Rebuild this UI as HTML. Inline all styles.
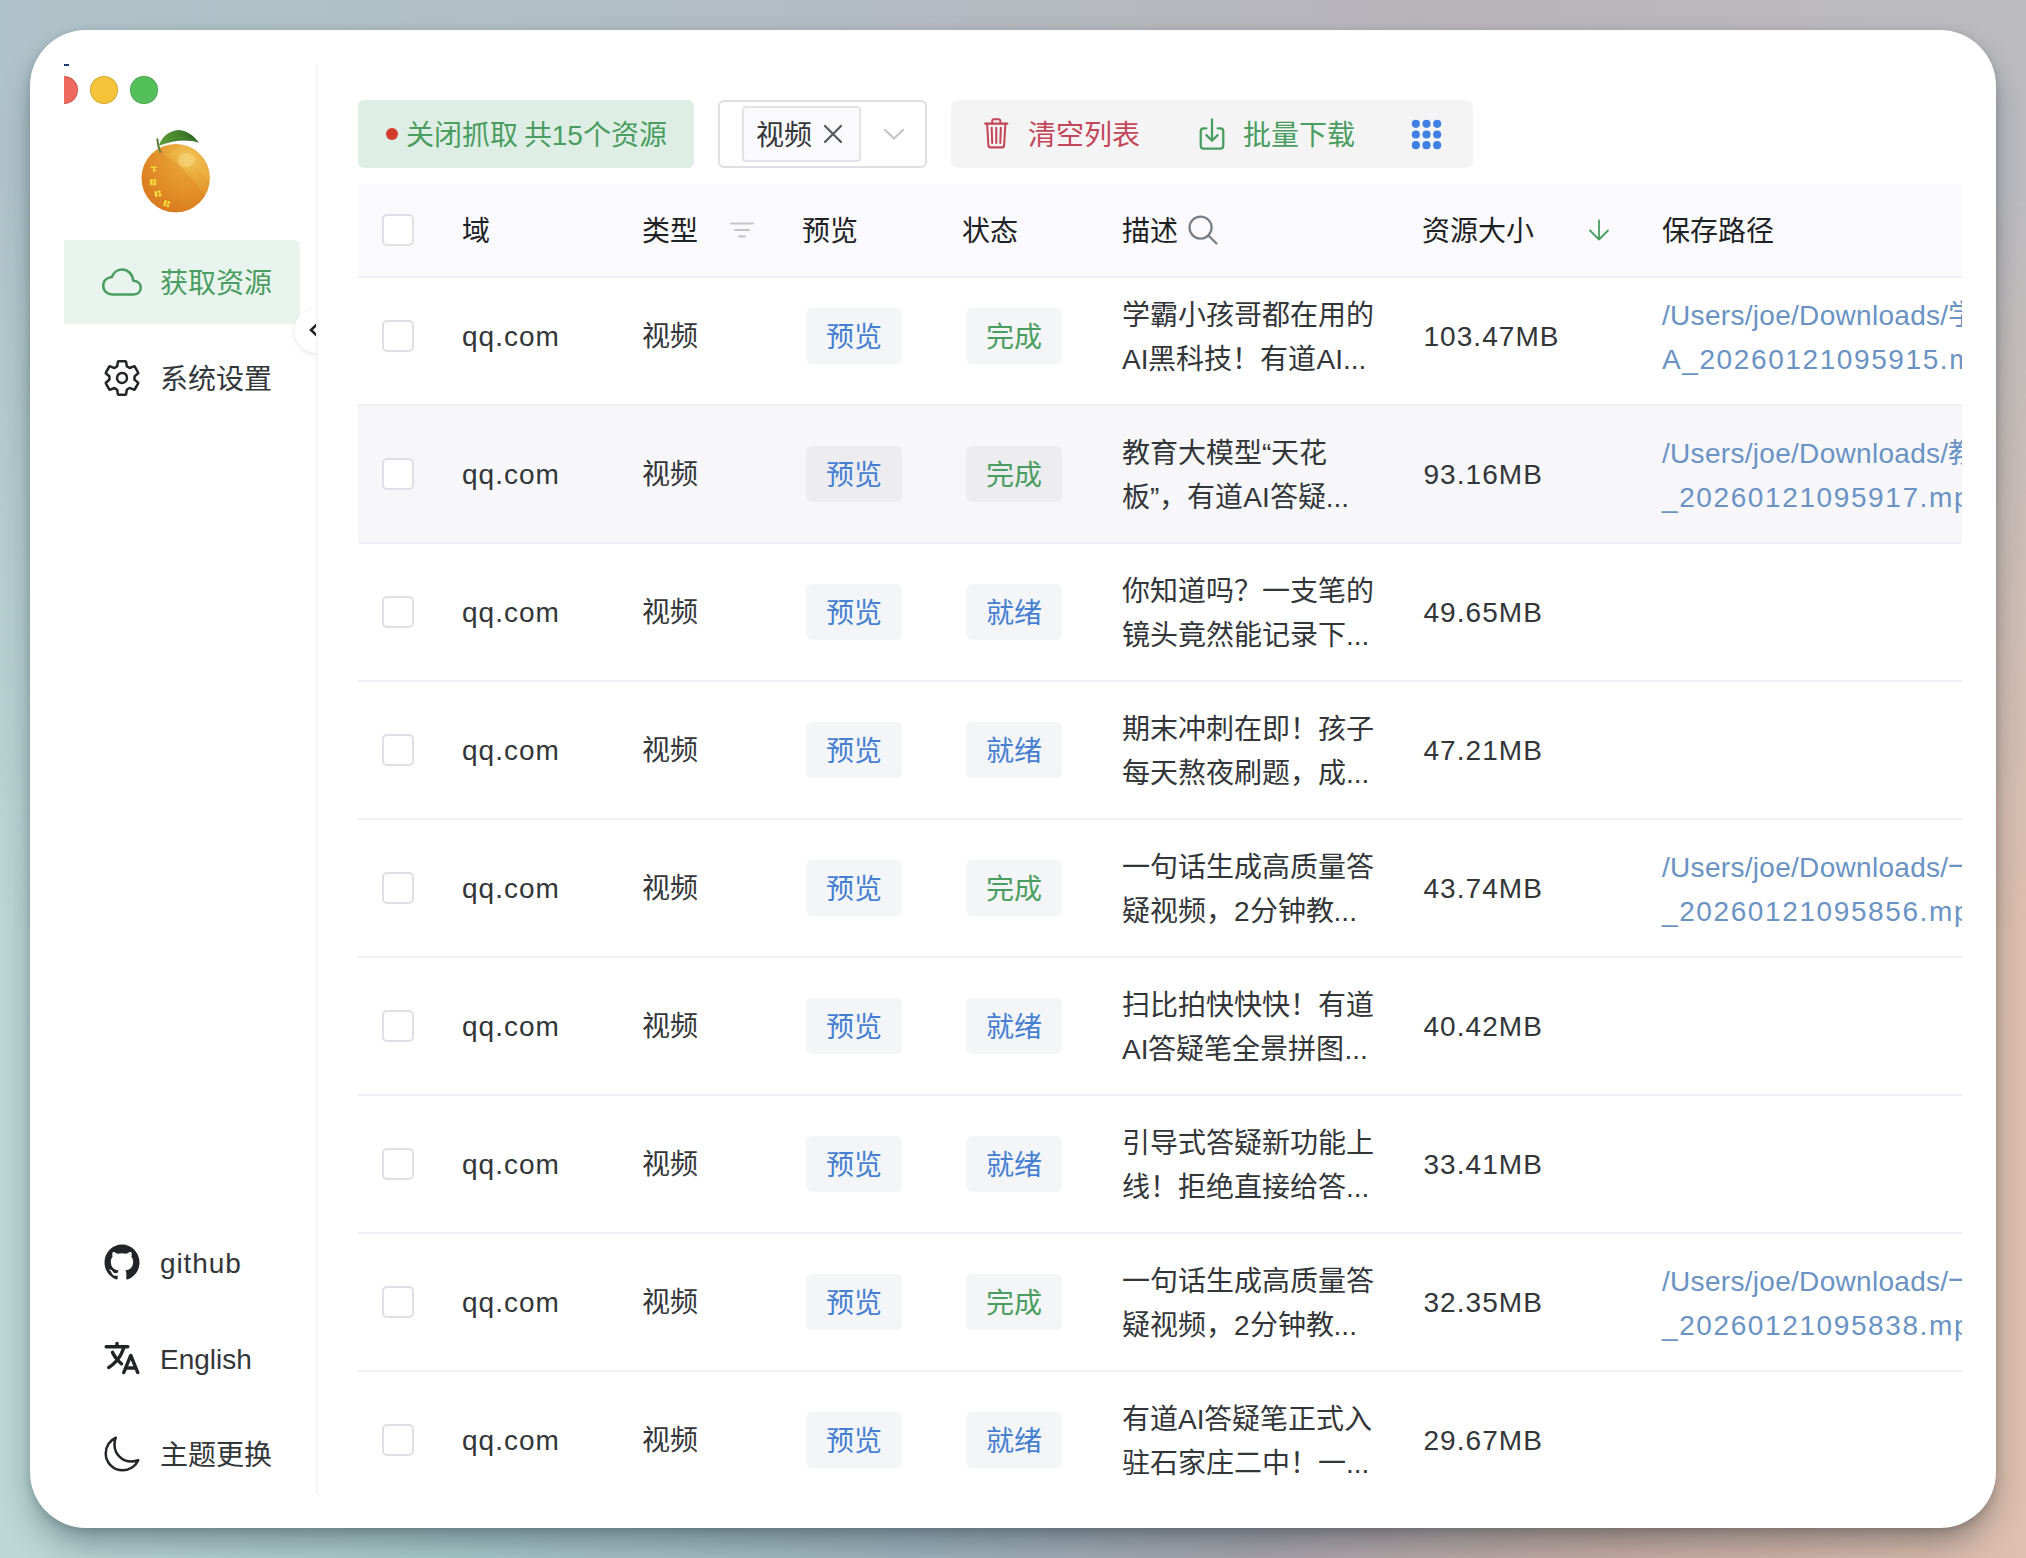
<!DOCTYPE html>
<html lang="zh-CN">
<head>
<meta charset="utf-8">
<title>res-downloader</title>
<style>
*{box-sizing:border-box;margin:0;padding:0}
html,body{width:2026px;height:1558px;overflow:hidden}
body{position:relative;font-family:"Liberation Sans",sans-serif;font-size:28px;color:#333639;background:#b4bcc2}
.bg{position:absolute;left:0;top:0;width:2026px;height:1558px;background:linear-gradient(to right,#bcd8d6 0%,#a9c8ca 24%,#9fb4be 46%,#aaa6ae 62%,#c9ada4 80%,#dfc0ae 100%)}
.bg2{position:absolute;left:0;top:0;width:2026px;height:1558px;background:linear-gradient(to right,#afc4ca 0%,#b2bdc5 35%,#b9b5ba 72%,#bcbcc0 100%);-webkit-mask-image:linear-gradient(to bottom,#000 0%,#000 12%,transparent 60%);mask-image:linear-gradient(to bottom,#000 0%,#000 12%,transparent 60%)}
.win{position:absolute;left:30px;top:30px;width:1966px;height:1498px;border-radius:56px;background:#fff;box-shadow:0 18px 34px -6px rgba(10,30,40,.42),0 2px 10px rgba(0,0,0,.14)}
.app{position:absolute;left:64px;top:64px;width:1898px;height:1430px;overflow:hidden;background:#fff}
.abs{position:absolute}
/* sidebar */
.sider{position:absolute;left:0;top:0;width:254px;height:1430px;border-right:2px solid #f5f5f8;overflow:hidden}
.tl{position:absolute;top:12px;width:28px;height:28px;border-radius:50%;border:1px solid rgba(0,0,0,.14)}
.mi{position:absolute;left:-16px;width:252px;height:84px;border-radius:6px;color:#333639}
.mi svg{color:#222427}
.mi.act svg{color:#4a9d60}
.mi svg{position:absolute;left:54px;top:22px}
.mi>span{position:absolute;left:112px;top:2px;line-height:84px;white-space:nowrap}
.mi.act{background:#e9f4ee;color:#4a9d60}
.tog{position:absolute;left:229.500px;top:243.500px;width:45px;height:45px;border-radius:50%;background:#fff;box-shadow:0 2px 5px rgba(0,0,0,.07),0 0 0 1px rgba(0,0,0,.03)}
/* toolbar */
.gbtn{position:absolute;left:294px;top:36px;width:336px;height:68px;border-radius:6px;background:#deeee5;color:#4a9d60;line-height:68px;white-space:nowrap}
.gbtn i{position:absolute;left:28px;top:28px;width:12px;height:12px;border-radius:50%;background:#d23b2d}
.gbtn>span{position:absolute;left:48px;top:2px;word-spacing:-2px}
.sel{position:absolute;left:654px;top:36px;width:209px;height:68px;border:2px solid #e0e0e4;border-radius:6px;background:#fff}
.tag{position:absolute;left:22px;top:4px;width:119px;height:56px;border:2px solid #e3e3e8;border-radius:4px;background:#fafafc;line-height:52px;white-space:nowrap}
.tag>span{position:absolute;left:12px;top:2px}
.grp{position:absolute;left:887px;top:36px;width:522px;height:68px;border-radius:6px;background:#f4f4f5;line-height:68px;white-space:nowrap}
.grp svg{position:absolute}
.grp>span{position:absolute;top:2px}
/* table */
.thead{position:absolute;left:294px;top:120px;width:1700px;height:94px;background:#fafafc;border-bottom:2px solid #efeff5;color:#1f2225;line-height:92px;white-space:nowrap;z-index:3}
.thead>span{position:absolute;top:2px}
.thead svg{position:absolute}
.row{position:absolute;left:294px;width:1700px;height:138px;border-bottom:2px solid #efeff5;background:#fff;white-space:nowrap}
.row.hov{background:#f7f7fa}
.cb{position:absolute;left:24px;top:52px;width:32px;height:32px;border:2px solid #dfdfe6;border-radius:5px;background:#fff}
.c{position:absolute;top:1px;height:136px;line-height:136px}
.dom{left:104px;letter-spacing:1px}
.typ{left:284px}
.btn{position:absolute;top:40px;width:96px;height:56px;border-radius:6px;background:#f4f5f6;line-height:56px;padding-top:2px;text-align:center}
.hov .btn{background:#ededf0}
.pv{left:448px;color:#447fd2}
.st{left:608px}
.st.g{color:#4a9d60}
.st.b{color:#447fd2}
.desc{left:764px;top:26px;height:88px;line-height:44px}
.size{left:1065.500px;letter-spacing:1.050px}
.path{left:1304px;top:26px;height:88px;line-height:44px;color:#6a93c4}
.j{display:inline-block;white-space:nowrap;text-align:justify;text-align-last:justify;vertical-align:baseline}
.btn .j{text-align-last:justify}
.p1{letter-spacing:.3px}
.p2{letter-spacing:1.6px}
</style>
</head>
<body>
<div class="bg"></div><div class="bg2"></div>
<div class="win"></div>
<div class="app">
  <div class="sider">
    <div class="abs" style="left:0;top:0;width:5px;height:2px;background:#1f3a6e"></div>
    <div class="tl" style="left:-14px;background:#ee6a5f"></div>
    <div class="tl" style="left:26px;background:#f5c43a"></div>
    <div class="tl" style="left:66px;background:#53c05a"></div>
    <svg class="abs" style="left:66px;top:56px" width="90" height="100" viewBox="0 0 90 100">
<defs>
<radialGradient id="og" cx="58" cy="40" r="60" gradientUnits="userSpaceOnUse"><stop offset="0" stop-color="#f0be52"/><stop offset=".3" stop-color="#eaaa3b"/><stop offset=".62" stop-color="#e3962e"/><stop offset="1" stop-color="#d8781f"/></radialGradient>
<linearGradient id="lg" x1="32" y1="14" x2="62" y2="24" gradientUnits="userSpaceOnUse"><stop offset="0" stop-color="#5b9a3a"/><stop offset=".55" stop-color="#3f7f2a"/><stop offset="1" stop-color="#2d6720"/></linearGradient>
<clipPath id="oc"><circle cx="45.700" cy="58.100" r="34.200"/></clipPath>
</defs>
<circle cx="45.700" cy="58.100" r="34.200" fill="url(#og)"/>
<g clip-path="url(#oc)">
<path d="M30 33C45 39 63 57 79 82L79 100L0 100L0 33Z" fill="#d86f18" opacity=".26"/>
<path d="M38 34C52 36 70 48 82 66L90 40L60 20Z" fill="#f6cc62" opacity=".22"/>
<path d="M8 70C16 88 40 98 70 86L70 100L0 100Z" fill="#d56a16" opacity=".22"/>
<ellipse cx="56.500" cy="40" rx="9" ry="7.500" fill="#f8d97e" opacity=".5"/>
<g fill="#fcedb4" opacity=".75"><circle cx="53" cy="37" r=".7"/><circle cx="56" cy="36" r=".7"/><circle cx="59" cy="37.500" r=".7"/><circle cx="54.500" cy="40" r=".7"/><circle cx="57.500" cy="40.500" r=".7"/><circle cx="60.500" cy="41" r=".7"/><circle cx="55.500" cy="43.500" r=".7"/><circle cx="58.500" cy="44" r=".7"/><circle cx="52" cy="41.500" r=".6"/></g>
</g>
<path d="M28.900 25.700C32 15 42 10 49 10C57 10.400 64 16 69 22.800C58 19 44 20 28.900 25.700Z" fill="url(#lg)"/>
<path d="M30 25C40 17.500 53 14.500 66.500 21.600" fill="none" stroke="#7bb558" stroke-width=".7" opacity=".55"/>
<path d="M27.400 19.300Q28 27 30.400 32.300" fill="none" stroke="#5f7f36" stroke-width="2" stroke-linecap="round"/>
<ellipse cx="30.800" cy="32.800" rx="2.400" ry="1" fill="#c98a3a" transform="rotate(-25 30.800 32.800)"/>
<g fill="#f8e640">
<path d="M20.600 46.400h6.200v1.300h-2.500v4.400h-1.300v-4.400h-2.400zM25 49.300l1.500 1.200-.7.800-1.500-1.200z"/>
<path d="M20.200 59.300h2.400v6h-2.400zM23.400 59.300h2.800v2.500h-2.800zM23.400 62.600h2.800v2.700h-2.800z" opacity=".95"/>
<path d="M24.300 71.600l2.400-.5.900 5.300-2.300.5zM27.700 70.800l2.600-.6.500 2.400-2.600.6zM28.500 74l2.600-.6.600 2.700-2.600.6z" opacity=".95"/>
<path d="M34.800 79.900l2.200.7-1.700 5.600-2.200-.7zM38 80.900l2.500.8-.8 2.400-2.500-.7zM37 84.200l2.400.8-.8 2.400-2.400-.8z" opacity=".95"/>
</g>
</svg>
    <div class="mi act" style="top:176px"><svg viewBox="0 0 512 512" width="40" height="40"><path d="M400 240c-8.89-89.54-71-144-144-144-69 0-113.44 48.2-128 96-60 6-112 43.59-112 112 0 66 54 112 120 112h260c55 0 100-27.44 100-88 0-59.82-53-85.76-96-88z" fill="none" stroke="currentColor" stroke-linejoin="round" stroke-width="32"/></svg><span><span class="j" style="width:112px">获取资源</span></span></div>
    <div class="mi" style="top:272px"><svg viewBox="0 0 512 512" width="40" height="40"><path d="M262.29 192.31a64 64 0 1057.4 57.4 64.13 64.13 0 00-57.4-57.4zM416.39 256a154.34 154.34 0 01-1.53 20.79l45.21 35.46a10.81 10.81 0 012.45 13.75l-42.77 74a10.81 10.81 0 01-13.14 4.59l-44.9-18.08a16.11 16.11 0 00-15.17 1.75A164.48 164.48 0 01325 400.8a15.94 15.94 0 00-8.82 12.14l-6.73 47.89a11.08 11.08 0 01-10.68 9.17h-85.54a11.11 11.11 0 01-10.69-8.87l-6.72-47.82a16.07 16.07 0 00-9-12.22 155.3 155.3 0 01-21.46-12.57 16 16 0 00-15.11-1.71l-44.89 18.07a10.81 10.81 0 01-13.14-4.58l-42.77-74a10.8 10.8 0 012.45-13.75l38.21-30a16.05 16.05 0 006-14.08c-.36-4.17-.58-8.33-.58-12.5s.21-8.27.58-12.35a16 16 0 00-6.07-13.94l-38.19-30A10.81 10.81 0 0149.48 186l42.77-74a10.81 10.81 0 0113.14-4.59l44.9 18.08a16.11 16.11 0 0015.17-1.75A164.48 164.48 0 01187 111.2a15.94 15.94 0 008.82-12.14l6.73-47.89A11.08 11.08 0 01213.23 42h85.54a11.11 11.11 0 0110.69 8.87l6.72 47.82a16.07 16.07 0 009 12.22 155.3 155.3 0 0121.46 12.57 16 16 0 0015.11 1.71l44.89-18.07a10.81 10.81 0 0113.14 4.58l42.77 74a10.8 10.8 0 01-2.45 13.75l-38.21 30a16.05 16.05 0 00-6.05 14.08c.33 4.14.55 8.3.55 12.47z" fill="none" stroke="currentColor" stroke-linecap="round" stroke-linejoin="round" stroke-width="32"/></svg><span><span class="j" style="width:112px">系统设置</span></span></div>
    <div class="mi" style="top:1156px"><svg viewBox="0 0 512 512" width="40" height="40"><path fill="currentColor" d="M256 32C132.3 32 32 134.9 32 261.7c0 101.5 64.2 187.500 153.2 217.9a17.560 17.560 0 003.8.4c8.3 0 11.5-6.1 11.5-11.4 0-5.5-.2-19.9-.3-39.1a102.400 102.400 0 01-22.600 2.700c-43.100 0-52.900-33.500-52.900-33.500-10.200-26.500-24.900-33.600-24.900-33.600-19.500-13.700-.1-14.100 1.400-14.100h.1c22.500 2 34.300 23.800 34.300 23.800 11.200 19.600 26.200 25.100 39.600 25.100a63 63 0 0025.600-6c2-14.800 7.800-24.900 14.200-30.700-49.700-5.800-102-25.500-102-113.500 0-25.100 8.700-45.600 23-61.600-2.300-5.800-10-29.200 2.200-60.800a18.640 18.640 0 015-.5c8.100 0 26.400 3.100 56.600 24.100a208.210 208.210 0 01112.200 0c30.200-21 48.500-24.100 56.600-24.100a18.640 18.640 0 015 .5c12.200 31.600 4.500 55 2.200 60.800 14.300 16.100 23 36.600 23 61.600 0 88.200-52.400 107.600-102.300 113.300 8 7.100 15.200 21.100 15.200 42.500 0 30.700-.3 55.500-.3 63 0 5.400 3.100 11.500 11.400 11.500a19.350 19.350 0 004-.4C415.900 449.200 480 363.100 480 261.700 480 134.900 379.700 32 256 32z"/></svg><span style="letter-spacing:.9px">github</span></div>
    <div class="mi" style="top:1252px"><svg viewBox="0 0 512 512" width="40" height="40"><path fill="currentColor" d="M478.33 433.6l-90-218a22 22 0 00-40.670 0l-90 218a22 22 0 1040.670 16.790L316.660 406h102.670l18.330 44.390A22 22 0 00458 464a22 22 0 0020.320-30.400zM334.830 362L368 281.650 401.170 362zM267.840 342.920a22 22 0 00-4.890-30.700c-.2-.15-15-11.130-36.490-34.730 39.650-53.680 62.110-114.750 71.270-143.490H330a22 22 0 000-44H214V70a22 22 0 00-44 0v20H54a22 22 0 000 44h197.250c-9.520 26.950-27.050 69.500-53.790 108.360-31.410-41.680-43.080-68.650-43.170-68.870a22 22 0 00-40.580 17c.58 1.380 14.550 34.230 52.860 83.930.92 1.190 1.830 2.350 2.740 3.510-39.240 44.350-77.740 71.860-93.850 80.740a22 22 0 1021.070 38.630c2.160-1.180 48.600-26.890 101.630-85.590 22.520 24.080 38 35.440 38.930 36.100a22 22 0 0030.750-4.900z"/></svg><span>English</span></div>
    <div class="mi" style="top:1348px"><svg viewBox="0 0 512 512" width="40" height="40"><path d="M160 136c0-30.620 4.510-61.610 16-88C99.570 81.270 48 159.320 48 248c0 119.290 96.710 216 216 216 88.680 0 166.730-51.570 200-128-26.390 11.490-57.380 16-88 16-119.290 0-216-96.710-216-216z" fill="none" stroke="currentColor" stroke-linecap="round" stroke-linejoin="round" stroke-width="32"/></svg><span><span class="j" style="width:112px">主题更换</span></span></div>
    <div class="tog"><svg class="abs" style="left:13px;top:12.500px" width="20" height="20" viewBox="0 0 20 20"><path d="M11.500 3L4 10l7.500 7" fill="none" stroke="#222" stroke-width="2.600" stroke-linecap="butt" stroke-linejoin="miter"/></svg></div>
  </div>

  <div class="gbtn"><i></i><span><span class="j" style="width:260.94px">关闭抓取 共15个资源</span></span></div>
  <div class="sel">
    <div class="tag"><span><span class="j" style="width:56px">视频</span></span>
      <svg class="abs" style="left:79px;top:16px" width="20" height="20" viewBox="0 0 20 20"><path d="M2 2l16 16M18 2L2 18" stroke="#55585c" stroke-width="2.200" stroke-linecap="round" fill="none"/></svg>
    </div>
    <svg class="abs" style="left:162.500px;top:26px" width="22" height="12.800" viewBox="0 0 24 14"><path d="M2 2l10 9.500L22 2" stroke="#c2c2c6" stroke-width="2.200" stroke-linecap="round" stroke-linejoin="round" fill="none"/></svg>
  </div>
  <div class="grp">
    <span style="left:0;top:0px;color:#c44659"><svg style="left:29.300px;top:16.300px" viewBox="0 0 512 512" width="32.500" height="34.600" preserveAspectRatio="none"><path d="M112 112l20 320c.95 18.490 14.400 32 32 32h184c17.670 0 30.870-13.510 32-32l20-320" fill="none" stroke="currentColor" stroke-linecap="round" stroke-linejoin="round" stroke-width="32"/><path stroke="currentColor" stroke-linecap="round" stroke-miterlimit="10" stroke-width="32" d="M80 112h352"/><path d="M192 112V72h0a23.930 23.930 0 0124-24h80a23.930 23.930 0 0124 24h0v40M256 176v224M184 176l8 224M328 176l-8 224" fill="none" stroke="currentColor" stroke-linecap="round" stroke-linejoin="round" stroke-width="32"/></svg></span>
    <span style="left:77px;color:#c44659"><span class="j" style="width:112px">清空列表</span></span>
    <span style="left:0;top:0px;color:#4a9d60"><svg style="left:243px;top:16px" viewBox="0 0 512 512" width="36" height="36"><path d="M336 176h40a40 40 0 0140 40v208a40 40 0 01-40 40H136a40 40 0 01-40-40V216a40 40 0 0140-40h40" fill="none" stroke="currentColor" stroke-linecap="round" stroke-linejoin="round" stroke-width="32"/><path fill="none" stroke="currentColor" stroke-linecap="round" stroke-linejoin="round" stroke-width="32" d="M176 272l80 80 80-80M256 48v288"/></svg></span>
    <span style="left:292px;color:#4a9d60"><span class="j" style="width:112px">批量下载</span></span>
    <svg style="left:460.400px;top:18.500px" width="31" height="31" viewBox="0 0 32 32" fill="#3f80e2"><circle cx="5" cy="5" r="4.200"/><circle cx="16" cy="5" r="4.200"/><circle cx="27" cy="5" r="4.200"/><circle cx="5" cy="16" r="4.200"/><circle cx="16" cy="16" r="4.200"/><circle cx="27" cy="16" r="4.200"/><circle cx="5" cy="27" r="4.200"/><circle cx="16" cy="27" r="4.200"/><circle cx="27" cy="27" r="4.200"/></svg>
  </div>

  <div class="thead">
    <i class="cb" style="top:30px"></i>
    <span style="left:104px"><span class="j" style="width:28px">域</span></span>
    <span style="left:284px"><span class="j" style="width:56px">类型</span></span>
    <svg style="left:372px;top:38px" width="24" height="16" viewBox="0 0 24 16"><path d="M1 1.500h22M5 8h14M9 14.500h6" stroke="#c4c4c8" stroke-width="2" stroke-linecap="round" fill="none"/></svg>
    <span style="left:444px"><span class="j" style="width:56px">预览</span></span>
    <span style="left:604px"><span class="j" style="width:56px">状态</span></span>
    <span style="left:764px"><span class="j" style="width:56px">描述</span></span>
    <span style="left:0;top:0;color:#797e84"><svg style="left:827px;top:28px" viewBox="0 0 512 512" width="36" height="36"><path d="M221.09 64a157.090 157.090 0 10157.090 157.090A157.100 157.100 0 00221.090 64z" fill="none" stroke="currentColor" stroke-miterlimit="10" stroke-width="32"/><path fill="none" stroke="currentColor" stroke-linecap="round" stroke-miterlimit="10" stroke-width="32" d="M338.29 338.29L448 448"/></svg></span>
    <span style="left:1064px"><span class="j" style="width:112px">资源大小</span></span>
    <svg style="left:1230px;top:35px" width="22" height="22" viewBox="0 0 22 22"><path d="M11 1.500v19M2 11.500l9 9 9-9" stroke="#4a9d60" stroke-width="1.800" stroke-linecap="round" stroke-linejoin="round" fill="none"/></svg>
    <span style="left:1304px"><span class="j" style="width:112px">保存路径</span></span>
  </div>
  <div class="row" style="top:204px">
  <i class="cb"></i>
  <div class="c dom">qq.com</div>
  <div class="c typ"><span class="j" style="width:56px">视频</span></div>
  <div class="btn pv"><span class="j" style="width:56px">预览</span></div>
  <div class="btn st g"><span class="j" style="width:56px">完成</span></div>
  <div class="c desc"><span class="j" style="width:252px">学霸小孩哥都在用的</span><br><span class="j" style="width:244.25px">AI黑科技！有道AI...</span></div>
  <div class="c size">103.47MB</div>
  <div class="c path"><span class="p1">/Users/joe/Downloads/学</span><br><span class="p2">A_20260121095915.mp4</span></div>
</div>
<div class="row hov" style="top:342px">
  <i class="cb"></i>
  <div class="c dom">qq.com</div>
  <div class="c typ"><span class="j" style="width:56px">视频</span></div>
  <div class="btn pv"><span class="j" style="width:56px">预览</span></div>
  <div class="btn st g"><span class="j" style="width:56px">完成</span></div>
  <div class="c desc"><span class="j" style="width:205.33px">教育大模型“天花</span><br><span class="j" style="width:227.13px">板”，有道AI答疑...</span></div>
  <div class="c size">93.16MB</div>
  <div class="c path"><span class="p1">/Users/joe/Downloads/教</span><br><span class="p2">_20260121095917.mp4</span></div>
</div>
<div class="row" style="top:480px">
  <i class="cb"></i>
  <div class="c dom">qq.com</div>
  <div class="c typ"><span class="j" style="width:56px">视频</span></div>
  <div class="btn pv"><span class="j" style="width:56px">预览</span></div>
  <div class="btn st b"><span class="j" style="width:56px">就绪</span></div>
  <div class="c desc"><span class="j" style="width:252px">你知道吗？一支笔的</span><br><span class="j" style="width:247.34px">镜头竟然能记录下...</span></div>
  <div class="c size">49.65MB</div>
  
</div>
<div class="row" style="top:618px">
  <i class="cb"></i>
  <div class="c dom">qq.com</div>
  <div class="c typ"><span class="j" style="width:56px">视频</span></div>
  <div class="btn pv"><span class="j" style="width:56px">预览</span></div>
  <div class="btn st b"><span class="j" style="width:56px">就绪</span></div>
  <div class="c desc"><span class="j" style="width:252px">期末冲刺在即！孩子</span><br><span class="j" style="width:247.34px">每天熬夜刷题，成...</span></div>
  <div class="c size">47.21MB</div>
  
</div>
<div class="row" style="top:756px">
  <i class="cb"></i>
  <div class="c dom">qq.com</div>
  <div class="c typ"><span class="j" style="width:56px">视频</span></div>
  <div class="btn pv"><span class="j" style="width:56px">预览</span></div>
  <div class="btn st g"><span class="j" style="width:56px">完成</span></div>
  <div class="c desc"><span class="j" style="width:252px">一句话生成高质量答</span><br><span class="j" style="width:234.92px">疑视频，2分钟教...</span></div>
  <div class="c size">43.74MB</div>
  <div class="c path"><span class="p1">/Users/joe/Downloads/一</span><br><span class="p2">_20260121095856.mp4</span></div>
</div>
<div class="row" style="top:894px">
  <i class="cb"></i>
  <div class="c dom">qq.com</div>
  <div class="c typ"><span class="j" style="width:56px">视频</span></div>
  <div class="btn pv"><span class="j" style="width:56px">预览</span></div>
  <div class="btn st b"><span class="j" style="width:56px">就绪</span></div>
  <div class="c desc"><span class="j" style="width:252px">扫比拍快快快！有道</span><br><span class="j" style="width:245.8px">AI答疑笔全景拼图...</span></div>
  <div class="c size">40.42MB</div>
  
</div>
<div class="row" style="top:1032px">
  <i class="cb"></i>
  <div class="c dom">qq.com</div>
  <div class="c typ"><span class="j" style="width:56px">视频</span></div>
  <div class="btn pv"><span class="j" style="width:56px">预览</span></div>
  <div class="btn st b"><span class="j" style="width:56px">就绪</span></div>
  <div class="c desc"><span class="j" style="width:252px">引导式答疑新功能上</span><br><span class="j" style="width:247.34px">线！拒绝直接给答...</span></div>
  <div class="c size">33.41MB</div>
  
</div>
<div class="row" style="top:1170px">
  <i class="cb"></i>
  <div class="c dom">qq.com</div>
  <div class="c typ"><span class="j" style="width:56px">视频</span></div>
  <div class="btn pv"><span class="j" style="width:56px">预览</span></div>
  <div class="btn st g"><span class="j" style="width:56px">完成</span></div>
  <div class="c desc"><span class="j" style="width:252px">一句话生成高质量答</span><br><span class="j" style="width:234.92px">疑视频，2分钟教...</span></div>
  <div class="c size">32.35MB</div>
  <div class="c path"><span class="p1">/Users/joe/Downloads/一</span><br><span class="p2">_20260121095838.mp4</span></div>
</div>
<div class="row" style="top:1308px">
  <i class="cb"></i>
  <div class="c dom">qq.com</div>
  <div class="c typ"><span class="j" style="width:56px">视频</span></div>
  <div class="btn pv"><span class="j" style="width:56px">预览</span></div>
  <div class="btn st b"><span class="j" style="width:56px">就绪</span></div>
  <div class="c desc"><span class="j" style="width:250.47px">有道AI答疑笔正式入</span><br><span class="j" style="width:247.34px">驻石家庄二中！一...</span></div>
  <div class="c size">29.67MB</div>
  
</div>
</div>
</body>
</html>
